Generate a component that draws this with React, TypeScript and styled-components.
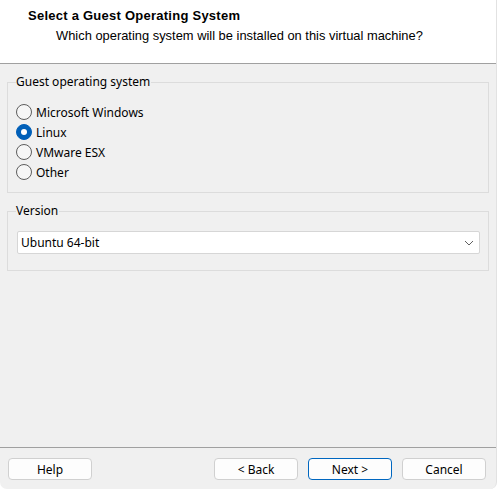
import { useState } from "react";
import styled, { createGlobalStyle } from "styled-components";

const GlobalStyle = createGlobalStyle`
    html, body {
        margin: 0;
        padding: 0;
        background: #ffffff;
    }
`;

const Window = styled.div`
    width: 497px;
    height: 489px;
    display: flex;
    flex-direction: column;
    background: #f0f0f0;
    font-family: "Noto Sans", "Open Sans", sans-serif;
    font-size: 12px;
    color: #000;
    box-sizing: border-box;
    border-bottom-left-radius: 7px;
    border-bottom-right-radius: 7px;
    border-right: 1px solid #e2e2e2;
    overflow: hidden;
`;

const Header = styled.div`
    height: 64px;
    background: #ffffff;
    border-bottom: 1px solid #a0a0a0;
    padding-top: 8px;
    box-sizing: border-box;
    flex-shrink: 0;
`;

const Title = styled.div`
    font-family: "Liberation Sans", Arial, sans-serif;
    font-weight: bold;
    font-size: 13px;
    letter-spacing: 0.25px;
    line-height: 16px;
    padding-left: 28px;
`;

const Subtitle = styled.div`
    font-family: "Liberation Sans", Arial, sans-serif;
    font-size: 12.9px;
    line-height: 16px;
    margin-top: 4px;
    padding-left: 56px;
`;

const Body = styled.div`
    flex: 1;
    padding: 0 7px 0 7px;
    display: flex;
    flex-direction: column;
`;

const Group = styled.fieldset<{ $bottom: number }>`
    margin: 10px 0 0 0;
    padding: 12px 8px ${p => p.$bottom}px 8px;
    border: 1px solid #dcdcdc;
    min-width: 0;
`;

const Legend = styled.legend`
    padding: 0 1px 0 0;
    line-height: 16px;
`;

const RadioList = styled.div`
    display: flex;
    flex-direction: column;
`;

const RadioRow = styled.label`
    height: 20px;
    display: flex;
    align-items: center;
    gap: 4px;
    cursor: default;
`;

const RadioCircle = styled.span<{ $checked: boolean }>`
    width: 16px;
    height: 16px;
    box-sizing: border-box;
    border-radius: 50%;
    flex-shrink: 0;
    display: flex;
    align-items: center;
    justify-content: center;
    background: ${p => (p.$checked ? "#005fb8" : "#f6f6f6")};
    border: 1px solid ${p => (p.$checked ? "#005fb8" : "#5d5d5d")};
    &::after {
        content: "";
        width: 6px;
        height: 6px;
        border-radius: 50%;
        background: #ffffff;
        display: ${p => (p.$checked ? "block" : "none")};
    }
`;

const Select = styled.div`
    height: 23px;
    margin-left: 1px;
    background: #ffffff;
    border: 1px solid #d6d6d6;
    border-radius: 2px;
    box-sizing: border-box;
    display: flex;
    align-items: center;
    justify-content: space-between;
    padding: 0 5px 0 3px;
`;

const Footer = styled.div`
    height: 42px;
    border-top: 1px solid #a0a0a0;
    box-sizing: border-box;
    padding: 10px 10px 0 8px;
    display: flex;
    flex-shrink: 0;
`;

const Spacer = styled.div`
    flex: 1;
`;

const ButtonGroup = styled.div`
    display: flex;
    gap: 10px;
`;

const Button = styled.button<{ $primary?: boolean }>`
    width: 84px;
    height: 22px;
    padding: 0;
    font-family: inherit;
    font-size: 12px;
    color: #000;
    background: #fdfdfd;
    border: 1px solid ${p => (p.$primary ? "#0067c0" : "#d0d0d0")};
    border-radius: 4px;
    box-sizing: border-box;
`;

const systems = ["Microsoft Windows", "Linux", "VMware ESX", "Other"];

const Chevron = () => (
    <svg width="10" height="6" viewBox="0 0 10 6">
        <path d="M1 1 L5 5 L9 1" fill="none" stroke="#606060" strokeWidth="1" />
    </svg>
);

export default function App() {
    const [os, setOs] = useState("Linux");

    return (
        <Window>
            <GlobalStyle />
            <Header>
                <Title>Select a Guest Operating System</Title>
                <Subtitle>Which operating system will be installed on this virtual machine?</Subtitle>
            </Header>
            <Body>
                <Group $bottom={10}>
                    <Legend>Guest operating system</Legend>
                    <RadioList>
                        {systems.map(s => (
                            <RadioRow key={s} onClick={() => setOs(s)}>
                                <RadioCircle $checked={os === s} />
                                {s}
                            </RadioRow>
                        ))}
                    </RadioList>
                </Group>
                <Group $bottom={16}>
                    <Legend>Version</Legend>
                    <Select>
                        <span>Ubuntu 64-bit</span>
                        <Chevron />
                    </Select>
                </Group>
            </Body>
            <Footer>
                <Button>Help</Button>
                <Spacer />
                <ButtonGroup>
                    <Button>&lt; Back</Button>
                    <Button $primary>Next &gt;</Button>
                    <Button>Cancel</Button>
                </ButtonGroup>
            </Footer>
        </Window>
    );
}
